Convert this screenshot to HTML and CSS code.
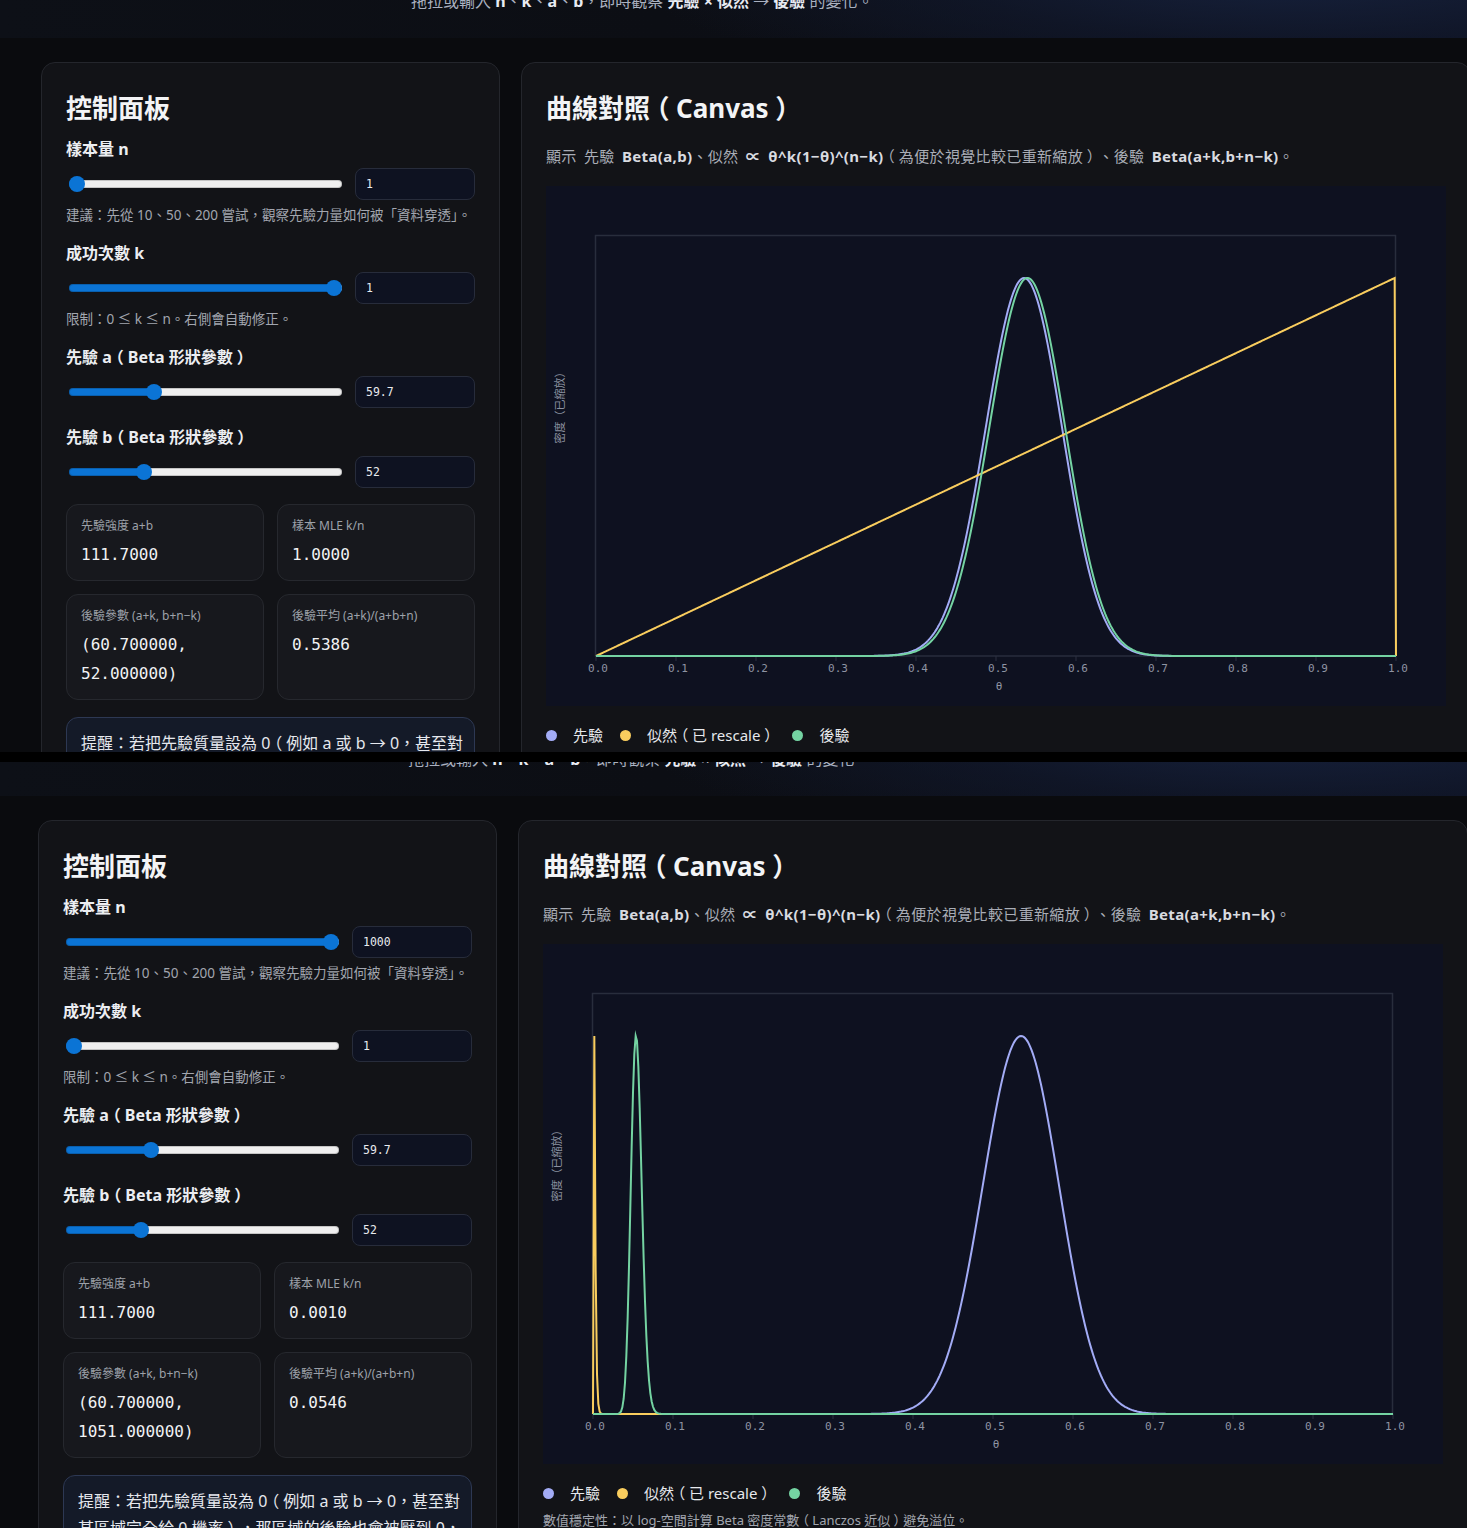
FILE: index.html
```html
<!DOCTYPE html>
<html lang="zh-Hant">
<head>
<meta charset="utf-8">
<title>Beta–Binomial 貝氏更新</title>
<link rel="stylesheet" href="styles.css">
</head>
<body>

<div class="shot shot-a">
  <div class="page page-a">
    <header class="hero">
      <p class="hero-sub">拖拉或輸入 <b>n</b>、<b>k</b>、<b>a</b>、<b>b</b>，即時觀察 <b>先驗</b> <b>×</b> <b>似然</b> → <b>後驗</b> 的變化。</p>
    </header>
    <main class="main">
      <section class="card panel">
        <h2 class="card-title">控制面板</h2>
        <div class="field">
          <div class="field-label">樣本量 n</div>
          <div class="field-row">
            <input class="range" type="range" min="1" max="1000" step="1" value="1" style="--f:0">
            <input class="num" type="text" value="1">
          </div>
          <div class="hint">建議：先從 10、50、200 嘗試，觀察先驗力量如何被「資料穿透」。</div>
        </div>
        <div class="field">
          <div class="field-label">成功次數 k</div>
          <div class="field-row">
            <input class="range" type="range" min="0" max="1" step="1" value="1" style="--f:1">
            <input class="num" type="text" value="1">
          </div>
          <div class="hint">限制：0 ≤ k ≤ n。右側會自動修正。</div>
        </div>
        <div class="field">
          <div class="field-label">先驗 a<span class="fp">（</span>Beta 形狀參數<span class="fp">）</span></div>
          <div class="field-row">
            <input class="range" type="range" min="0" max="200" step="0.1" value="59.7" style="--f:0.2985">
            <input class="num" type="text" value="59.7">
          </div>
        </div>
        <div class="field">
          <div class="field-label">先驗 b<span class="fp">（</span>Beta 形狀參數<span class="fp">）</span></div>
          <div class="field-row">
            <input class="range" type="range" min="0" max="200" step="0.1" value="52" style="--f:0.26">
            <input class="num" type="text" value="52">
          </div>
        </div>
        <div class="stats">
          <div class="stat"><div class="stat-label">先驗強度 a+b</div><div class="stat-value">111.7000</div></div>
          <div class="stat"><div class="stat-label">樣本 MLE k/n</div><div class="stat-value">1.0000</div></div>
          <div class="stat"><div class="stat-label">後驗參數 (a+k, b+n−k)</div><div class="stat-value">(60.700000, 52.000000)</div></div>
          <div class="stat"><div class="stat-label">後驗平均 (a+k)/(a+b+n)</div><div class="stat-value">0.5386</div></div>
        </div>
        <div class="note">提醒：若把先驗質量設為 0<span class="fp">（</span>例如 a 或 b → 0，甚至對某區域完全給 0 機率<span class="fp">）</span>，那區域的後驗也會被壓到 0，資料再多也無法挽回。</div>
      </section>

      <section class="card plot-card">
        <h2 class="card-title">曲線對照<span class="fp">（</span>Canvas<span class="fp">）</span></h2>
        <p class="desc">顯示 先驗 <b>Beta(a,b)</b>、似然 <b>∝ θ^k(1−θ)^(n−k)</b><span class="fp">（</span>為便於視覺比較已重新縮放<span class="fp">）</span>、後驗 <b>Beta(a+k,b+n−k)</b>。</p>
        <svg class="chart" width="900" height="520" viewBox="0 0 900 520" data-n="1" data-k="1" data-a="59.7" data-b="52">
          <rect class="frame" x="49.5" y="49.5" width="800" height="420.5"></rect>
          <g class="ticks">
            <line x1="50" y1="470" x2="50" y2="475"></line><line x1="130" y1="470" x2="130" y2="475"></line><line x1="210" y1="470" x2="210" y2="475"></line><line x1="290" y1="470" x2="290" y2="475"></line><line x1="370" y1="470" x2="370" y2="475"></line><line x1="450" y1="470" x2="450" y2="475"></line><line x1="530" y1="470" x2="530" y2="475"></line><line x1="610" y1="470" x2="610" y2="475"></line><line x1="690" y1="470" x2="690" y2="475"></line><line x1="770" y1="470" x2="770" y2="475"></line><line x1="850" y1="470" x2="850" y2="475"></line>
          </g>
          <g class="tick-labels">
            <text x="52" y="486">0.0</text><text x="132" y="486">0.1</text><text x="212" y="486">0.2</text><text x="292" y="486">0.3</text><text x="372" y="486">0.4</text><text x="452" y="486">0.5</text><text x="532" y="486">0.6</text><text x="612" y="486">0.7</text><text x="692" y="486">0.8</text><text x="772" y="486">0.9</text><text x="852" y="486">1.0</text>
            <text x="453" y="504">θ</text>
          </g>
          <text class="ylabel" transform="translate(18 219) rotate(-90)">密度（已縮放）</text>
          <path class="curve c-prior" d=""></path>
          <path class="curve c-like" d=""></path>
          <path class="curve c-post" d=""></path>
        </svg>
        <div class="legend">
          <span class="legend-item"><i class="dot dot-prior"></i><span>先驗</span></span>
          <span class="legend-item"><i class="dot dot-like"></i><span>似然<span class="fp">（</span>已 rescale<span class="fp">）</span></span></span>
          <span class="legend-item"><i class="dot dot-post"></i><span>後驗</span></span>
        </div>
        <p class="foot">數值穩定性：以 log-空間計算 Beta 密度常數<span class="fp">（</span>Lanczos 近似<span class="fp">）</span>避免溢位。</p>
      </section>
    </main>
  </div>
</div>

<div class="divider"></div>

<div class="shot shot-b">
  <div class="page page-b">
    <header class="hero">
      <p class="hero-sub">拖拉或輸入 <b>n</b>、<b>k</b>、<b>a</b>、<b>b</b>，即時觀察 <b>先驗</b> <b>×</b> <b>似然</b> → <b>後驗</b> 的變化。</p>
    </header>
    <main class="main">
      <section class="card panel">
        <h2 class="card-title">控制面板</h2>
        <div class="field">
          <div class="field-label">樣本量 n</div>
          <div class="field-row">
            <input class="range" type="range" min="1" max="1000" step="1" value="1000" style="--f:1">
            <input class="num" type="text" value="1000">
          </div>
          <div class="hint">建議：先從 10、50、200 嘗試，觀察先驗力量如何被「資料穿透」。</div>
        </div>
        <div class="field">
          <div class="field-label">成功次數 k</div>
          <div class="field-row">
            <input class="range" type="range" min="0" max="1000" step="1" value="1" style="--f:0.001">
            <input class="num" type="text" value="1">
          </div>
          <div class="hint">限制：0 ≤ k ≤ n。右側會自動修正。</div>
        </div>
        <div class="field">
          <div class="field-label">先驗 a<span class="fp">（</span>Beta 形狀參數<span class="fp">）</span></div>
          <div class="field-row">
            <input class="range" type="range" min="0" max="200" step="0.1" value="59.7" style="--f:0.2985">
            <input class="num" type="text" value="59.7">
          </div>
        </div>
        <div class="field">
          <div class="field-label">先驗 b<span class="fp">（</span>Beta 形狀參數<span class="fp">）</span></div>
          <div class="field-row">
            <input class="range" type="range" min="0" max="200" step="0.1" value="52" style="--f:0.26">
            <input class="num" type="text" value="52">
          </div>
        </div>
        <div class="stats">
          <div class="stat"><div class="stat-label">先驗強度 a+b</div><div class="stat-value">111.7000</div></div>
          <div class="stat"><div class="stat-label">樣本 MLE k/n</div><div class="stat-value">0.0010</div></div>
          <div class="stat"><div class="stat-label">後驗參數 (a+k, b+n−k)</div><div class="stat-value">(60.700000, 1051.000000)</div></div>
          <div class="stat"><div class="stat-label">後驗平均 (a+k)/(a+b+n)</div><div class="stat-value">0.0546</div></div>
        </div>
        <div class="note">提醒：若把先驗質量設為 0<span class="fp">（</span>例如 a 或 b → 0，甚至對某區域完全給 0 機率<span class="fp">）</span>，那區域的後驗也會被壓到 0，資料再多也無法挽回。</div>
      </section>

      <section class="card plot-card">
        <h2 class="card-title">曲線對照<span class="fp">（</span>Canvas<span class="fp">）</span></h2>
        <p class="desc">顯示 先驗 <b>Beta(a,b)</b>、似然 <b>∝ θ^k(1−θ)^(n−k)</b><span class="fp">（</span>為便於視覺比較已重新縮放<span class="fp">）</span>、後驗 <b>Beta(a+k,b+n−k)</b>。</p>
        <svg class="chart" width="900" height="520" viewBox="0 0 900 520" data-n="1000" data-k="1" data-a="59.7" data-b="52">
          <rect class="frame" x="49.5" y="49.5" width="800" height="420.5"></rect>
          <g class="ticks">
            <line x1="50" y1="470" x2="50" y2="475"></line><line x1="130" y1="470" x2="130" y2="475"></line><line x1="210" y1="470" x2="210" y2="475"></line><line x1="290" y1="470" x2="290" y2="475"></line><line x1="370" y1="470" x2="370" y2="475"></line><line x1="450" y1="470" x2="450" y2="475"></line><line x1="530" y1="470" x2="530" y2="475"></line><line x1="610" y1="470" x2="610" y2="475"></line><line x1="690" y1="470" x2="690" y2="475"></line><line x1="770" y1="470" x2="770" y2="475"></line><line x1="850" y1="470" x2="850" y2="475"></line>
          </g>
          <g class="tick-labels">
            <text x="52" y="486">0.0</text><text x="132" y="486">0.1</text><text x="212" y="486">0.2</text><text x="292" y="486">0.3</text><text x="372" y="486">0.4</text><text x="452" y="486">0.5</text><text x="532" y="486">0.6</text><text x="612" y="486">0.7</text><text x="692" y="486">0.8</text><text x="772" y="486">0.9</text><text x="852" y="486">1.0</text>
            <text x="453" y="504">θ</text>
          </g>
          <text class="ylabel" transform="translate(18 219) rotate(-90)">密度（已縮放）</text>
          <path class="curve c-prior" d=""></path>
          <path class="curve c-like" d=""></path>
          <path class="curve c-post" d=""></path>
        </svg>
        <div class="legend">
          <span class="legend-item"><i class="dot dot-prior"></i><span>先驗</span></span>
          <span class="legend-item"><i class="dot dot-like"></i><span>似然<span class="fp">（</span>已 rescale<span class="fp">）</span></span></span>
          <span class="legend-item"><i class="dot dot-post"></i><span>後驗</span></span>
        </div>
        <p class="foot">數值穩定性：以 log-空間計算 Beta 密度常數<span class="fp">（</span>Lanczos 近似<span class="fp">）</span>避免溢位。</p>
      </section>
    </main>
  </div>
</div>

<script src="script.js"></script>
</body>
</html>
```

FILE: styles.css
```css
* { box-sizing: border-box; }

html, body {
  margin: 0;
  padding: 0;
  background: #000;
}

body {
  font-family: "Noto Sans", "Noto Sans CJK TC", sans-serif;
  color: #e6e8ec;
  width: 1467px;
  overflow: hidden;
}

.shot {
  height: 752px;
  overflow: hidden;
  background: #0a0b0e;
}

.shot-b { height: 766px; }

.divider {
  height: 10px;
  background: #000;
}

.page-a { margin-top: -26px; }
.page-b { margin-top: -30px; }

/* full-width parentheses: glyph trimmed to half width, centred in a 1em cell */
.fp {
  font-feature-settings: "halt" 1;
  padding: 0 0.25em;
}

/* header */
.hero {
  padding: 16px 0 26px 411px;
  background:
    radial-gradient(60% 260% at 88% 0%, rgba(24, 36, 66, 0.85) 0%, rgba(18, 26, 48, 0.55) 40%, rgba(12, 14, 20, 0) 75%),
    linear-gradient(90deg, #0d1017 0%, #0c0e14 45%, #0e1220 100%);
}

.page-b .hero { padding-left: 408px; }

.hero-sub {
  margin: 0;
  font-size: 16px;
  line-height: 22px;
  color: #aab1c0;
}

.hero-sub b {
  color: #e8ebf2;
  font-weight: 700;
}

/* layout */
.main {
  display: grid;
  grid-template-columns: 459px 950px;
  column-gap: 21px;
  align-items: start;
  padding: 24px 0 0 41px;
}

.page-b .main { padding-left: 38px; }

.card {
  background: #121317;
  border: 1px solid #24262c;
  border-radius: 14px;
  padding: 28px 24px 24px;
}

.card-title {
  margin: 0 0 13px;
  font-size: 26px;
  line-height: 34px;
  font-weight: 700;
  color: #f3f4f6;
}

/* control panel */
.field + .field { margin-top: 18px; }

.field-label {
  font-size: 16px;
  line-height: 22px;
  font-weight: 700;
  color: #eceef2;
  margin-bottom: 8px;
}

.field-row {
  display: flex;
  align-items: center;
  gap: 10px;
  height: 32px;
}

.range {
  -webkit-appearance: none;
  appearance: none;
  flex: 1;
  min-width: 0;
  height: 8px;
  margin: 0 3px;
  border-radius: 4px;
  background: linear-gradient(90deg, #0b74d5 0 calc(8px + (100% - 16px) * var(--f)), #efefef 0);
  box-shadow: inset 0 0 0 1px rgba(0, 0, 0, 0.18);
  outline: none;
}

.range::-webkit-slider-thumb {
  -webkit-appearance: none;
  appearance: none;
  width: 16px;
  height: 16px;
  border-radius: 50%;
  background: #0b74d5;
  border: none;
}

.num {
  width: 120px;
  height: 32px;
  flex: none;
  background: #0e1221;
  border: 1px solid #272c3b;
  border-radius: 8px;
  padding: 0 10px;
  font-family: "DejaVu Sans Mono", "Liberation Mono", monospace;
  font-size: 11.5px;
  color: #e8eaee;
  outline: none;
}

.hint {
  margin-top: 6px;
  font-size: 13.5px;
  line-height: 18px;
  color: #a2a6af;
}

.stats {
  margin-top: 16px;
  display: grid;
  grid-template-columns: 1fr 1fr;
  gap: 13px;
}

.stat {
  background: #17181d;
  border: 1px solid #26282e;
  border-radius: 12px;
  padding: 12px 14px 11px;
}

.stat-label {
  font-size: 12px;
  line-height: 18px;
  color: #9da1a9;
  margin-bottom: 5px;
}

.stat-value {
  font-family: "DejaVu Sans Mono", "Liberation Mono", monospace;
  font-size: 16px;
  line-height: 29px;
  color: #f1f2f4;
}

.note {
  margin-top: 17px;
  padding: 12px 8px 12px 14px;
  background: #141a28;
  border: 1px solid #2d3853;
  border-radius: 12px;
  font-size: 16px;
  line-height: 27px;
  color: #e6e8ee;
}

/* plot card */
.desc {
  margin: 20px 0 0;
  font-size: 15px;
  line-height: 22px;
  color: #a9adb6;
  letter-spacing: 0.35px;
  word-spacing: 3px;
}

.desc b {
  color: #d9dbe0;
  font-weight: 700;
}

.chart {
  display: block;
  margin-top: 19px;
  background: #0e1120;
}

.chart .frame {
  fill: none;
  stroke: #282d3c;
  stroke-width: 1.5;
}

.chart .ticks line {
  stroke: #2c3141;
  stroke-width: 1;
}

.chart .tick-labels text {
  font-family: "DejaVu Sans Mono", "Liberation Mono", monospace;
  font-size: 11px;
  fill: #8e94a3;
  text-anchor: middle;
}

.chart .ylabel {
  font-family: "Noto Sans CJK TC", sans-serif;
  font-size: 11px;
  fill: #8a909f;
  text-anchor: middle;
}

.curve {
  fill: none;
  stroke-width: 2;
  stroke-linejoin: miter;
  stroke-miterlimit: 10;
}

.c-prior { stroke: #a3acf6; }
.c-like { stroke: #f9cd5e; }
.c-post { stroke: #74d3a2; }

.legend {
  display: flex;
  align-items: center;
  gap: 17px;
  margin-top: 18px;
  font-size: 15px;
  line-height: 22px;
  color: #e6e8ec;
}

.legend-item {
  display: flex;
  flex: none;
  align-items: center;
  gap: 16px;
  white-space: nowrap;
}

.dot {
  display: block;
  width: 11px;
  height: 11px;
  border-radius: 50%;
}

.dot-prior { background: #a3acf6; }
.dot-like { background: #f9cd5e; }
.dot-post { background: #74d3a2; }

.foot {
  margin: 7px 0 0;
  font-size: 13px;
  line-height: 18px;
  color: #a2a6af;
}
```

FILE: script.js
```js
(function () {
  var N = 600, X0 = 50, W = 800, Y0 = 470, H = 420;

  function build(logf) {
    var vals = [], max = -Infinity, i, t, v;
    for (i = 0; i <= N; i++) {
      t = i / N;
      v = logf(t);
      vals.push(v);
      if (isFinite(v) && v > max) max = v;
    }
    var d = '';
    for (i = 0; i <= N; i++) {
      v = vals[i];
      var y = isFinite(v) ? Math.exp(v - max) : 0;
      var px = X0 + W * i / N;
      var py = Y0 - 0.9 * H * y;
      d += (i ? 'L' : 'M') + px.toFixed(2) + ' ' + py.toFixed(2);
    }
    return d;
  }

  var charts = document.querySelectorAll('svg.chart');
  for (var c = 0; c < charts.length; c++) {
    var svg = charts[c];
    var n = +svg.getAttribute('data-n');
    var k = +svg.getAttribute('data-k');
    var a = +svg.getAttribute('data-a');
    var b = +svg.getAttribute('data-b');

    var prior = build(function (t) { return (a - 1) * Math.log(t) + (b - 1) * Math.log(1 - t); });
    var like = build(function (t) { return k * Math.log(t) + (n - k) * Math.log(1 - t); });
    var post = build(function (t) { return (a + k - 1) * Math.log(t) + (b + n - k - 1) * Math.log(1 - t); });

    svg.querySelector('.c-prior').setAttribute('d', prior);
    svg.querySelector('.c-like').setAttribute('d', like);
    svg.querySelector('.c-post').setAttribute('d', post);
  }
})();
```
